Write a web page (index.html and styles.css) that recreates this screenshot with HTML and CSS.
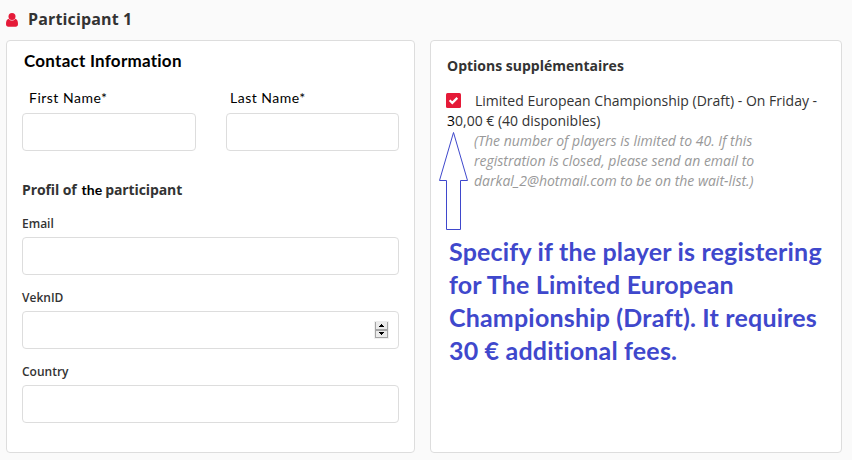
FILE: index.html
```html
<!DOCTYPE html>
<html lang="fr">
<head>
    <meta charset="UTF-8">
    <meta name="viewport" content="width=device-width, initial-scale=1.0">
    <title>Participant 1</title>
    <link rel="stylesheet" href="styles.css">
</head>
<body>
    <div class="participant-title">
        <svg class="icon-user" width="12" height="14" viewBox="0 0 12 14">
            <path d="M2.500 5.800C0.800 6.400 0 8.200 0 11.100C0 12.900 0.900 13.700 2.300 13.700H9.700C11.100 13.700 12 12.900 12 11.100C12 8.200 11.200 6.400 9.500 5.800C8.500 7.200 7.300 7.600 6 7.600C4.700 7.600 3.500 7.200 2.500 5.800Z"/>
            <circle cx="6" cy="3.600" r="3.500"/>
        </svg>
        <h1>Participant 1</h1>
    </div>

    <div class="container">
        <div class="panel panel-contact">
            <h2 class="contact-title">Contact Information</h2>
            <div class="name-row">
                <div class="name-field">
                    <label class="name-label first" for="firstName">First Name*</label>
                    <input type="text" id="firstName">
                </div>
                <div class="name-field">
                    <label class="name-label last" for="lastName">Last Name*</label>
                    <input type="text" id="lastName">
                </div>
            </div>

            <h2 class="profile-title"><span class="profil">Profil of</span> <span class="the">the</span> <span class="part">participant</span></h2>
            <div class="field">
                <label for="email">Email</label>
                <input type="text" id="email">
            </div>
            <div class="field">
                <label for="veknId">VeknID</label>
                <div class="number-input">
                    <input type="text" id="veknId">
                    <svg class="spinner" width="15" height="18" viewBox="0 0 15 18" shape-rendering="crispEdges">
                        <rect width="15" height="18" fill="#f0f0f0"/>
                        <rect x="1" y="1" width="13" height="16" fill="#a5a5a5"/>
                        <rect x="2" y="0" width="11" height="8" fill="#ebebeb"/>
                        <rect x="2" y="10" width="11" height="6" fill="#ebebeb"/>
                        <path d="M7 3h1v1h1v1h1v1h-5v-1h1v-1h1zM5 11h5v1h-1v1h-1v1h-1v-1h-1v-1h-1z" fill="#000"/>
                    </svg>
                </div>
            </div>
            <div class="field">
                <label for="country">Country</label>
                <input type="text" id="country">
            </div>
        </div>

        <div class="panel panel-options">
            <h2 class="options-title">Options supplémentaires</h2>
            <div class="option">
                <svg class="checkbox" width="15" height="15" viewBox="0 0 15 15">
                    <rect width="15" height="15" rx="1.500" fill="#e51a38"/>
                    <path d="M3.600 7.300L6.300 9.900L11.300 4.900" fill="none" stroke="#fff" stroke-width="2.200"/>
                </svg>
                <span>Limited European Championship (Draft) - On Friday -<br><span class="digit">3</span>0,00 € (40 disponibles)</span>
            </div>
            <p class="help">(The number of players is limited to 40. If this<br>registration is closed, please send an email to<br>darkal_2@hotmail.com to be on the wait-list.)</p>
            <svg class="arrow" width="31" height="99" viewBox="0 0 31 99">
                <path d="M15.500 0.500L29.500 48.500H22.500V97.500H8.500V48.500H1.500Z"/>
            </svg>
            <p class="note">
                Specify if the player is registering<br>
                for The Limited European<br>
                Championship (Draft). It requires<br>
                30 € additional fees.
            </p>
        </div>
    </div>
</body>
</html>
```
FILE: styles.css
```css
* {
    box-sizing: border-box;
}
body {
    margin: 0;
    height: 460px;
    overflow: hidden;
    background-color: #fafafa;
    color: #333;
    font-family: 'Open Sans', 'Noto Sans', sans-serif;
    font-size: 14px;
}
h1, h2, p {
    margin: 0;
}
.participant-title {
    display: flex;
    align-items: center;
    height: 40px;
    padding-left: 6px;
}
.icon-user {
    fill: #e51a38;
    margin-right: 10px;
}
h1 {
    font-size: 16px;
    letter-spacing: 0.15px;
    line-height: 22px;
    padding-bottom: 2px;
}
h2 {
    font-size: 14px;
    line-height: 20px;
    white-space: nowrap;
}
.container {
    display: flex;
    gap: 15px;
    padding-left: 6px;
}
.panel {
    height: 413px;
    padding: 15px;
    background-color: #fff;
    border: 1px solid #ddd;
    border-radius: 4px;
}
.panel-contact {
    width: 409px;
    padding-top: 9px;
}
.panel-options {
    position: relative;
    width: 412px;
}
.contact-title {
    padding-left: 2px;
    color: #000;
    font-family: Lato, sans-serif;
    font-size: 17px;
    letter-spacing: 0.25px;
    line-height: 22px;
}
.name-row {
    display: grid;
    grid-template-columns: 174px 173px;
    gap: 30px;
    margin-top: 16px;
}
.name-label {
    display: block;
    height: 25px;
    color: #000;
    font-family: Lato, sans-serif;
    font-size: 14px;
    letter-spacing: 0.5px;
    line-height: 20px;
}
.name-label.first {
    padding-left: 7px;
}
.name-label.last {
    padding-left: 4px;
}
input {
    display: block;
    width: 100%;
    height: 38px;
    padding: 8px;
    background-color: #fff;
    border: 1px solid #ddd;
    border-radius: 4px;
}
.profile-title {
    display: flex;
    margin-top: 29px;
    margin-bottom: 14px;
    letter-spacing: -0.1px;
}
.profile-title .the {
    margin: 0 3px 0 5px;
    color: #000;
    font-family: Lato, sans-serif;
    letter-spacing: 0;
}
.field {
    margin-bottom: 13px;
}
.field label {
    display: block;
    height: 23px;
    font-size: 12px;
    font-weight: 600;
    line-height: 20px;
}
.number-input {
    position: relative;
}
.spinner {
    position: absolute;
    top: 10px;
    right: 10px;
}
.options-title {
    padding-left: 1px;
}
.option {
    position: relative;
    margin-top: 15px;
    padding-left: 1px;
    line-height: 20px;
    text-indent: 28px;
    white-space: nowrap;
}
.checkbox {
    position: absolute;
    top: 2px;
    left: 0;
}
.digit {
    color: #000;
}
.help {
    padding-left: 28px;
    color: #999;
    font-style: italic;
    line-height: 20px;
    white-space: nowrap;
}
.arrow {
    position: absolute;
    top: 91px;
    left: 7px;
    fill: none;
    stroke: #3f48cc;
    stroke-width: 1;
}
.note {
    margin-top: 44px;
    padding-left: 3px;
    color: #3f48cc;
    font-family: Lato, sans-serif;
    font-size: 25px;
    font-weight: bold;
    letter-spacing: 0.18px;
    line-height: 33px;
    white-space: nowrap;
}
```
